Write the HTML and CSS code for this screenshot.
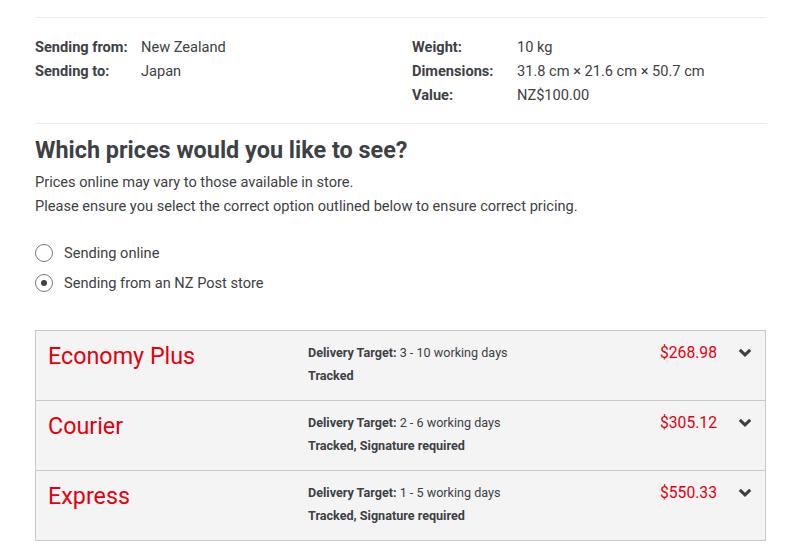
FILE: index.html
```html
<!DOCTYPE html>
<html>
<head>
<meta charset="utf-8">
<link rel="stylesheet" href="styles.css">
</head>
<body>
<div class="page">
  <hr class="rule">
  <div class="summary">
    <div class="col col-left">
      <div class="kv"><span class="k">Sending from:</span><span class="v">New Zealand</span></div>
      <div class="kv"><span class="k">Sending to:</span><span class="v">Japan</span></div>
    </div>
    <div class="col col-right">
      <div class="kv"><span class="k">Weight:</span><span class="v">10 kg</span></div>
      <div class="kv"><span class="k">Dimensions:</span><span class="v">31.8 cm × 21.6 cm × 50.7 cm</span></div>
      <div class="kv"><span class="k">Value:</span><span class="v">NZ$100.00</span></div>
    </div>
  </div>
  <hr class="rule">
  <h2 class="title">Which prices would you like to see?</h2>
  <p class="intro">Prices online may vary to those available in store.<br>Please ensure you select the correct option outlined below to ensure correct pricing.</p>
  <div class="radios">
    <label class="radio"><span class="circle"></span>Sending online</label>
    <label class="radio"><span class="circle checked"></span>Sending from an NZ Post store</label>
  </div>
  <div class="services">
    <div class="service">
      <div class="name">Economy Plus</div>
      <div class="details"><div><b>Delivery Target:</b> 3 - 10 working days</div><div><b>Tracked</b></div></div>
      <div class="price">$268.98</div>
      <div class="chev"><svg width="14" height="9" viewBox="0 0 14 9"><path d="M1.8 1.8 L7 6.8 L12.2 1.8" fill="none" stroke="#3c3f43" stroke-width="3"/></svg></div>
    </div>
    <div class="service">
      <div class="name">Courier</div>
      <div class="details"><div><b>Delivery Target:</b> 2 - 6 working days</div><div><b>Tracked, Signature required</b></div></div>
      <div class="price">$305.12</div>
      <div class="chev"><svg width="14" height="9" viewBox="0 0 14 9"><path d="M1.8 1.8 L7 6.8 L12.2 1.8" fill="none" stroke="#3c3f43" stroke-width="3"/></svg></div>
    </div>
    <div class="service">
      <div class="name">Express</div>
      <div class="details"><div><b>Delivery Target:</b> 1 - 5 working days</div><div><b>Tracked, Signature required</b></div></div>
      <div class="price">$550.33</div>
      <div class="chev"><svg width="14" height="9" viewBox="0 0 14 9"><path d="M1.8 1.8 L7 6.8 L12.2 1.8" fill="none" stroke="#3c3f43" stroke-width="3"/></svg></div>
    </div>
  </div>
</div>
</body>
</html>
```
FILE: styles.css
```css
* { box-sizing: border-box; }
html, body { margin: 0; padding: 0; background: #fff; }
body {
  font-family: Roboto, "Liberation Sans", Arial, sans-serif;
  color: #3d4145;
  font-size: 14.6px;
}
.page {
  width: 731px;
  margin-left: 35px;
  padding-top: 17px;
}
.rule {
  border: 0;
  border-top: 1px solid #ececec;
  margin: 0;
  height: 0;
}
.summary {
  display: flex;
  padding: 17px 0 16px;
}
.col-left { width: 377px; }
.col-right { flex: 1; }
.kv { display: flex; line-height: 24px; }
.k { font-weight: 700; }
.col-left .k { width: 106px; }
.col-right .k { width: 105px; }
.title {
  font-size: 23.4px;
  font-weight: 700;
  line-height: 30px;
  margin: 11px 0 5px;
}
.intro {
  margin: 0;
  line-height: 24px;
}
.radios {
  display: flex;
  flex-direction: column;
  margin-top: 20px;
}
.radio {
  display: flex;
  align-items: center;
  line-height: 30px;
  height: 30px;
}
.circle {
  width: 18px;
  height: 18px;
  border: 1px solid #75787c;
  border-radius: 50%;
  margin-right: 11px;
  display: flex;
  align-items: center;
  justify-content: center;
}
.circle.checked::after {
  content: "";
  width: 6px;
  height: 6px;
  border-radius: 50%;
  background: #3d4145;
}
.services {
  margin-top: 32px;
  border: 1px solid #c9c9c9;
  background: #f4f4f4;
}
.service {
  display: grid;
  grid-template-columns: 260px 1fr auto 48px;
  height: 70px;
  padding: 10px 0 0 12px;
  border-top: 1px solid #c9c9c9;
}
.service:first-child { border-top: 0; height: 69px; }
.name {
  color: #e3000f;
  font-size: 23.3px;
  line-height: 30px;
}
.details {
  font-size: 12.6px;
  line-height: 23px;
}
.details b { font-weight: 700; }
.price {
  color: #e3000f;
  font-size: 15.7px;
  line-height: 23px;
}
.chev {
  display: flex;
  justify-content: flex-end;
  padding-right: 13px;
  padding-top: 7px;
  height: 23px;
}
```
